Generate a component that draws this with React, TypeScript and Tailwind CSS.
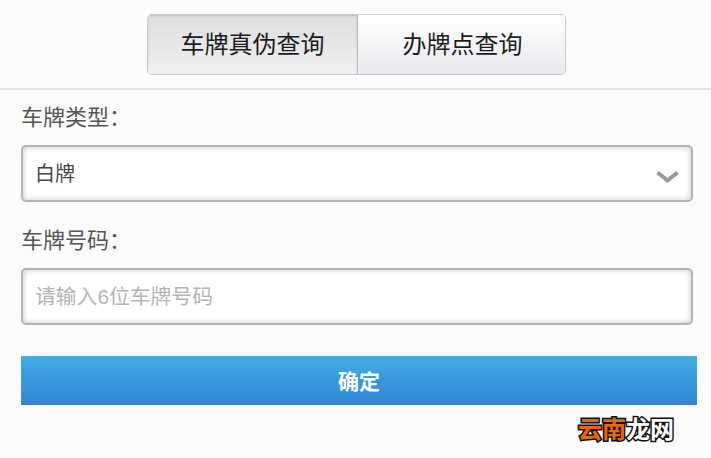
const font = 'font-["Liberation_Sans","Noto_Sans_CJK_SC",sans-serif]'

export default function App() {
  return (
    <div className={`relative h-[458px] w-[711px] overflow-hidden bg-[#fbfbfb] ${font}`}>
      {/* Tabs */}
      <div className="flex h-[90px] justify-center border-b-2 border-[#e3e3e3] pl-[2px] pt-[14px]">
        <div className="flex h-[61px] w-[419px] overflow-hidden rounded-[5px] border border-[#c9cacc] text-[24px] text-[#1c1c1c]">
          <div className="flex w-[210px] items-center justify-center border-r border-[#b5b6b8] bg-gradient-to-b from-[#dcdddf] to-[#f1f1f2] shadow-[inset_0_1px_2px_rgba(0,0,0,0.15)]">
            车牌真伪查询
          </div>
          <div className="flex flex-1 items-center justify-center bg-gradient-to-b from-white to-[#e9eaed] pl-[2px]">
            办牌点查询
          </div>
        </div>
      </div>

      {/* Form */}
      <div className="pl-[21px] pr-[18px]">
        <div className="flex h-[55px] items-center text-[22px] leading-none text-[#555]">车牌类型：</div>
        <div className="flex h-[57px] w-[672px] items-center justify-between rounded-[5px] border-2 border-[#b4b4b4] bg-white pl-[13px] pr-[12px] text-[20px] text-[#444] shadow-[inset_0_0_6px_rgba(0,0,0,0.22)]">
          <span className="-ml-px">白牌</span>
          <svg className="mt-[8px] h-[15px] w-[23px] text-[#999]" viewBox="0 0 23 15" fill="none">
            <path d="M1.5 2.5 L11.5 10.5 L21.5 2.5" stroke="currentColor" strokeWidth="4" />
          </svg>
        </div>
        <div className="flex h-[66px] items-center pt-[12px] text-[22px] leading-none text-[#555]">车牌号码：</div>
        <div className="flex h-[57px] w-[672px] items-center rounded-[5px] border-2 border-[#b4b4b4] bg-white pl-[12px] text-[20.8px] text-[#b4b4b4] shadow-[inset_0_0_6px_rgba(0,0,0,0.22)]">
          请输入6位车牌号码
        </div>
        <div className="mt-[31px] flex h-[49px] w-[676px] items-center justify-center bg-gradient-to-b from-[#42ade3] to-[#3285d6] pt-[2px] text-[21px] font-bold text-white">
          确定
        </div>
      </div>

      {/* Watermark */}
      <div className="absolute left-[578px] top-[416px] flex text-[24px] font-bold leading-[28px] [paint-order:stroke_fill] [-webkit-text-stroke:3px_#111]">
        <span className="text-[#e8680f]">云南</span>
        <span className="text-white">龙网</span>
      </div>
    </div>
  )
}
